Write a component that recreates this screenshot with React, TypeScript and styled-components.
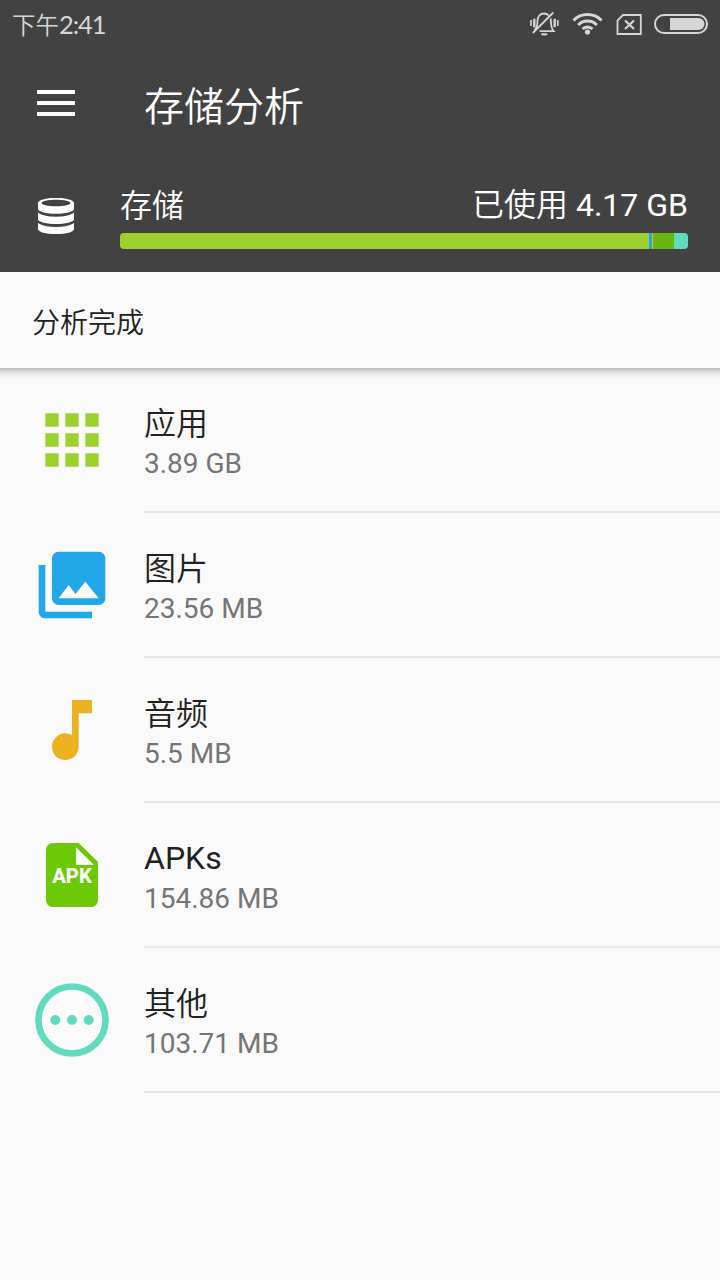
import React from "react";
import styled, { createGlobalStyle } from "styled-components";

const GlobalStyle = createGlobalStyle`
  * { box-sizing: border-box; }
  body {
    margin: 0;
    background: #fafafa;
    font-family: Roboto, "Noto Sans CJK SC", sans-serif;
  }
`;

const Screen = styled.main`
  display: flex;
  flex-direction: column;
  width: 720px;
  height: 1280px;
  background: #fafafa;
  overflow: hidden;
`;

const Header = styled.header`
  height: 272px;
  background: #424242;
  color: #fff;
`;

const StatusBar = styled.div`
  display: flex;
  justify-content: space-between;
  height: 48px;
  padding-left: 12px;
  color: #d6d6d6;
`;

const Clock = styled.span`
  font-family: "Noto Sans CJK SC", sans-serif;
  font-size: 23.5px;
  font-weight: 350;
  line-height: 48px;
`;

const Digits = styled.span`
  font-family: Lato, sans-serif;
  font-size: 25.5px;
  font-weight: 400;
  letter-spacing: -1.1px;
`;

const Toolbar = styled.div`
  display: flex;
  align-items: center;
  height: 112px;
  padding: 0 0 2px 37px;
`;

const Title = styled.h1`
  margin: 9px 0 0 69px;
  font-size: 40px;
  font-weight: 350;
  line-height: 56px;
`;

const Usage = styled.section`
  display: flex;
  padding: 22px 32px 0 38px;
`;

const UsageBody = styled.div`
  flex: 1;
  margin-left: 46px;
`;

const UsageLabels = styled.div`
  display: flex;
  justify-content: space-between;
  height: 51px;
  font-size: 32px;
  font-weight: 400;
  line-height: 46px;
`;

const Cjk = styled.span`
  font-weight: 350;
`;

const UsageName = styled(Cjk)`
  padding-top: 1px;
`;

const Bar = styled.div`
  display: flex;
  height: 16px;
  border-radius: 4px;
  overflow: hidden;
`;

const Segment = styled.div<{ $size: number; $color: string }>`
  flex: ${(p) => p.$size} 0 0;
  background: ${(p) => p.$color};
`;

const Notice = styled.div`
  position: relative;
  height: 96px;
  padding: 3px 0 0 32px;
  color: #212121;
  font-size: 28px;
  font-weight: 350;
  line-height: 98px;

  &::after {
    content: "";
    position: absolute;
    top: 100%;
    left: 0;
    right: 0;
    height: 10px;
    background: linear-gradient(rgba(0, 0, 0, 0.26), rgba(0, 0, 0, 0.12) 35%, rgba(0, 0, 0, 0.03) 75%, transparent);
  }
`;

const List = styled.ul`
  margin: 0;
  padding: 0;
  list-style: none;
`;

const Row = styled.li`
  display: flex;
  height: 145px;
  padding-left: 32px;
`;

const RowIcon = styled.svg`
  width: 80px;
  height: 80px;
  margin: 32px 32px 0 0;
`;

const RowText = styled.div`
  flex: 1;
  padding-top: 34px;
  border-bottom: 2px solid #e7e7e7;
`;

const Name = styled.div<{ $latin?: boolean }>`
  height: 43px;
  padding-top: ${(p) => (p.$latin ? 0 : 1)}px;
  color: #212121;
  font-size: 32px;
  font-weight: ${(p) => (p.$latin ? 400 : 350)};
  line-height: 42px;
`;

const Size = styled.div`
  color: #757575;
  font-size: 28px;
  line-height: 38px;
`;

const IconLabel = styled.text`
  font: 800 6.1px Roboto, sans-serif;
  fill: #fff;
`;

const segments = [
  { size: 529, color: "#9dd12d" },
  { size: 3, color: "#22a8e8" },
  { size: 1, color: "#ecb220" },
  { size: 21, color: "#67b90f" },
  { size: 14, color: "#61dbbd" },
];

const categories = [
  {
    name: "应用",
    size: "3.89 GB",
    color: "#9dd12d",
    icon: <path d="M4 8h4V4H4v4zm6 12h4v-4h-4v4zm-6 0h4v-4H4v4zm0-6h4v-4H4v4zm6 0h4v-4h-4v4zm6-10v4h4V4h-4zm-6 4h4V4h-4v4zm6 6h4v-4h-4v4zm0 6h4v-4h-4v4z" />,
  },
  {
    name: "图片",
    size: "23.56 MB",
    color: "#22a8e8",
    icon: <path d="M22 16V4c0-1.1-.9-2-2-2H8c-1.1 0-2 .9-2 2v12c0 1.1.9 2 2 2h12c1.1 0 2-.9 2-2zm-11-4l2.03 2.71L16 11l4 5H8l3-4zM2 6v14c0 1.1.9 2 2 2h14v-2H4V6H2z" />,
  },
  {
    name: "音频",
    size: "5.5 MB",
    color: "#ecb220",
    icon: <path d="M12 3v10.55c-.59-.34-1.27-.55-2-.55-2.21 0-4 1.79-4 4s1.79 4 4 4 4-1.79 4-4V7h4V3h-6z" />,
  },
  {
    name: "APKs",
    latin: true,
    size: "154.86 MB",
    color: "#6cc905",
    icon: (
      <>
        <path d="M6 2.4h8l5.8 5.7v11.5a2 2 0 0 1-2 2H6.2a2 2 0 0 1-2-2V4.4a2 2 0 0 1 2-2z" />
        <path fill="#fafafa" d="M13.2 3.7V9h5.4z" />
        <IconLabel x="6.05" y="14.3" textLength="11.9" lengthAdjust="spacingAndGlyphs">APK</IconLabel>
      </>
    ),
  },
  {
    name: "其他",
    size: "103.71 MB",
    color: "#61dbbd",
    icon: (
      <>
        <circle cx="12" cy="12" r="10.05" fill="none" stroke="#61dbbd" strokeWidth="2" />
        <circle cx="7" cy="12" r="1.5" />
        <circle cx="12" cy="12" r="1.5" />
        <circle cx="17" cy="12" r="1.5" />
      </>
    ),
  },
];

const StatusIcons = () => (
  <svg width="200" height="48" viewBox="0 0 200 48" fill="none" stroke="#d6d6d6" strokeWidth="1.8">
    <path d="M14.500 30c2.500-2 3-4.500 3-9 0-4.500 2.500-7.500 6.500-7.500 2 0 3.500.7 4.600 1.900M30.800 18.500c.2 5-.3 9 2.900 12.700H19.500M33.300 12.500 12.800 33" />
    <path d="M21.500 33.700c1 1 4.500 1 5.500 0" strokeWidth="2" />
    <path d="M11 20v6M37.800 20v6" strokeWidth="1.600" />
    <path d="M14.300 18.800v8.400M34.700 18.800v8.400" strokeWidth="2.400" />
    <path strokeWidth="3" d="M53.500 20.500a19.500 19.500 0 0 1 28 0M58.200 25a13 13 0 0 1 18.600 0M62.500 29a7 7 0 0 1 10 0" />
    <circle cx="67.500" cy="32" r="2.600" fill="#d6d6d6" stroke="none" />
    <path d="M97.500 20.500 103 15h17.800v19H97.500z" />
    <path d="m105 20.500 9 8.500M114 20.500l-9 8.500" strokeWidth="2.200" />
    <rect x="135" y="15" width="52" height="18" rx="9" strokeWidth="2" />
    <path d="M150 18h28.500a6 6 0 0 1 0 12H150z" fill="#d6d6d6" stroke="none" />
  </svg>
);

const MenuIcon = () => (
  <svg width="38" height="26" fill="#fff">
    <path d="M0 0h38v4H0zM0 11h38v4H0zM0 22h38v4H0z" />
  </svg>
);

const DatabaseIcon = () => (
  <svg width="36" height="36" viewBox="0 0 36 36" fill="#fff">
    <path fillRule="evenodd" d="M0 5C0 2 8 0 18 0s18 2 18 5v6.500c-2 2.800-9 4.200-18 4.200S2 14.300 0 11.500zM3.500 5c0 1.800 6 3.200 14.500 3.200S32.500 6.800 32.500 5 26.500 1.700 18 1.700 3.500 3.200 3.500 5z" />
    <path d="M0 14.700c4 2.600 10 4 18 4s14-1.400 18-4v7c-2 2.800-9 4.200-18 4.200S2 24.500 0 21.700z" />
    <path d="M0 24.900c4 2.600 10 4 18 4s14-1.400 18-4V31c0 3-8 5-18 5S0 34 0 31z" />
  </svg>
);

const DatabaseSlot = styled.div`
  width: 36px;
  padding-top: 16px;
`;

export default function App() {
  return (
    <Screen>
      <GlobalStyle />
      <Header>
        <StatusBar>
          <Clock>
            下午<Digits>2:41</Digits>
          </Clock>
          <StatusIcons />
        </StatusBar>
        <Toolbar>
          <MenuIcon />
          <Title>存储分析</Title>
        </Toolbar>
        <Usage>
          <DatabaseSlot>
            <DatabaseIcon />
          </DatabaseSlot>
          <UsageBody>
            <UsageLabels>
              <UsageName>存储</UsageName>
              <span>
                <Cjk>已使用</Cjk> 4.17 GB
              </span>
            </UsageLabels>
            <Bar>
              {segments.map((s) => (
                <Segment key={s.color} $size={s.size} $color={s.color} />
              ))}
            </Bar>
          </UsageBody>
        </Usage>
      </Header>
      <Notice>分析完成</Notice>
      <List>
        {categories.map((c) => (
          <Row key={c.name}>
            <RowIcon viewBox="0 0 24 24" fill={c.color}>
              {c.icon}
            </RowIcon>
            <RowText>
              <Name $latin={c.latin}>{c.name}</Name>
              <Size>{c.size}</Size>
            </RowText>
          </Row>
        ))}
      </List>
    </Screen>
  );
}
